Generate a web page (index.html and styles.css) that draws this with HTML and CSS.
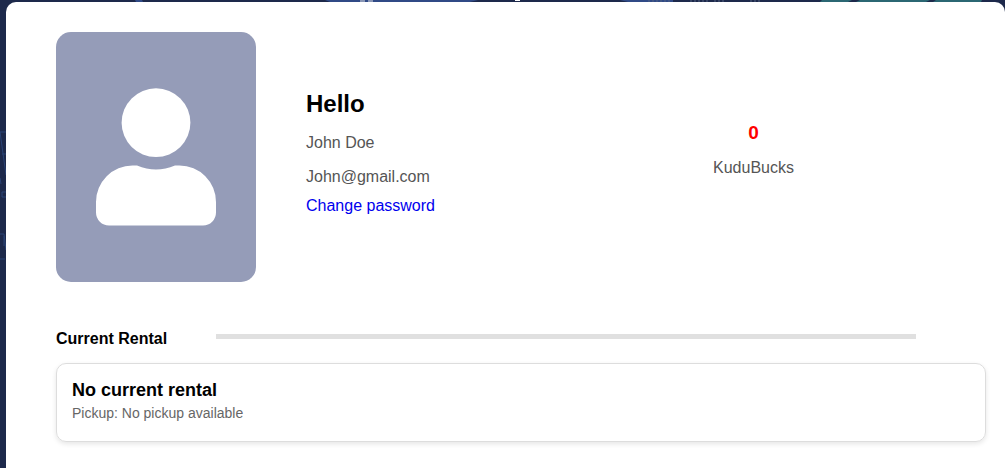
FILE: index.html
```html
<!DOCTYPE html>
<html lang="en">
<head>
  <meta charset="utf-8">
  <meta name="viewport" content="width=device-width, initial-scale=1">
  <title>Profile</title>
  <link rel="stylesheet" href="styles.css">
</head>
<body>
  <svg class="backdrop" width="1005" height="468" viewBox="0 0 1005 468" aria-hidden="true">
    <path d="M135 0h7l1 2h-7zM325 0h153l-8 2H330zM620 0h53v2h-45z" fill="#304a86"/>
    <path d="M822 0h30l-4 2h-28zM860 0h70l-4 2h-70zM936 0h46l-1 2h-48z" fill="#2b6773"/>
    <path d="M360 1h5M368 1h5" stroke="#8996b5" stroke-width="2"/>
    <path d="M515 0h5" stroke="#fff" stroke-width="2"/>
    <path d="M648 1h22M690 1h18M714 1h10M750 1h12" stroke="#536381" stroke-dasharray="2 2"/>
    <path d="M6 132H0l6 43M2 154h4M0 178l1 6M6 192H2v5h4M0 234h4l2 16M4 236v10M0 259h5" fill="none" stroke="#2b4476"/>
  </svg>
  <main class="profile">
    <section class="summary">
      <div class="identity">
        <svg class="avatar" viewBox="0 0 200 250" role="img" aria-label="Profile picture">
          <rect width="200" height="250" fill="#959cb8"/>
          <circle cx="100" cy="90.7" r="34.4" fill="#fff"/>
          <path d="M40 170A36.500 36.500 0 0 1 76.500 133.500H81Q100 141.500 119 133.500H123.500A36.500 36.500 0 0 1 160 170V180.500A13 13 0 0 1 147 193.500H53A13 13 0 0 1 40 180.500Z" fill="#fff"/>
        </svg>
        <div class="details">
          <h1 class="greeting">Hello</h1>
          <p class="detail">John Doe</p>
          <p class="detail">John@gmail.com</p>
          <a class="password-link" href="#">Change password</a>
        </div>
      </div>
      <div class="balance">
        <strong class="amount">0</strong>
        <span class="currency">KuduBucks</span>
      </div>
    </section>
    <section class="rental">
      <div class="rental-header">
        <h2 class="rental-title">Current Rental</h2>
        <div class="divider"></div>
      </div>
      <article class="rental-card">
        <h3 class="rental-name">No current rental</h3>
        <p class="pickup">Pickup: No pickup available</p>
      </article>
    </section>
  </main>
</body>
</html>
```

FILE: styles.css
```css
* {
  box-sizing: border-box;
}

body {
  display: flex;
  min-height: 100vh;
  margin: 0;
  padding: 2px 0 0 6px;
  background: #1d294b;
  font-family: "Liberation Sans", Arial, sans-serif;
  font-size: 16px;
  line-height: 18px;
}

h1,
h2,
h3,
p {
  margin: 0;
}

.backdrop {
  position: absolute;
  top: 0;
  left: 0;
  z-index: -1;
}

.profile {
  flex: 1;
  min-width: 0;
  padding: 30px 19px 26px 50px;
  border-radius: 10px 10px 0 0;
  background: #fff;
}

.summary {
  display: grid;
  grid-template-columns: 1fr 1fr;
}

.identity {
  display: flex;
  align-items: center;
  gap: 50px;
}

.avatar {
  flex: none;
  width: 200px;
  height: 250px;
  border-radius: 15px;
}

.details {
  display: flex;
  flex-direction: column;
  align-items: flex-start;
  padding-bottom: 10px;
  color: #555;
}

.greeting {
  margin-bottom: 16px;
  color: #000;
  font-size: 24px;
  line-height: 28px;
}

.detail + .detail {
  margin: 16px 0 11px;
}

.password-link {
  color: #00e;
  text-decoration: none;
}

.balance {
  display: flex;
  flex-direction: column;
  align-items: center;
  justify-content: center;
  gap: 16px;
  padding-bottom: 14px;
}

.amount {
  color: #f00;
  font-size: 19px;
  line-height: 20px;
}

.currency {
  color: #555;
}

.rental {
  margin-top: 48px;
}

.rental-header {
  display: grid;
  grid-template-columns: 160px 1fr;
  padding-right: 70px;
}

.rental-title {
  font-size: 16px;
}

.divider {
  height: 5px;
  margin-top: 4px;
  background: #e0e0e0;
}

.rental-card {
  margin-top: 15px;
  padding: 16px 15px 19px;
  border: 1px solid #ddd;
  border-radius: 10px;
  box-shadow: 0 2px 5px rgba(0, 0, 0, 0.1);
}

.rental-name {
  font-size: 18px;
  line-height: 20px;
}

.pickup {
  margin-top: 4px;
  color: #666;
  font-size: 14px;
  line-height: 18px;
}
```
